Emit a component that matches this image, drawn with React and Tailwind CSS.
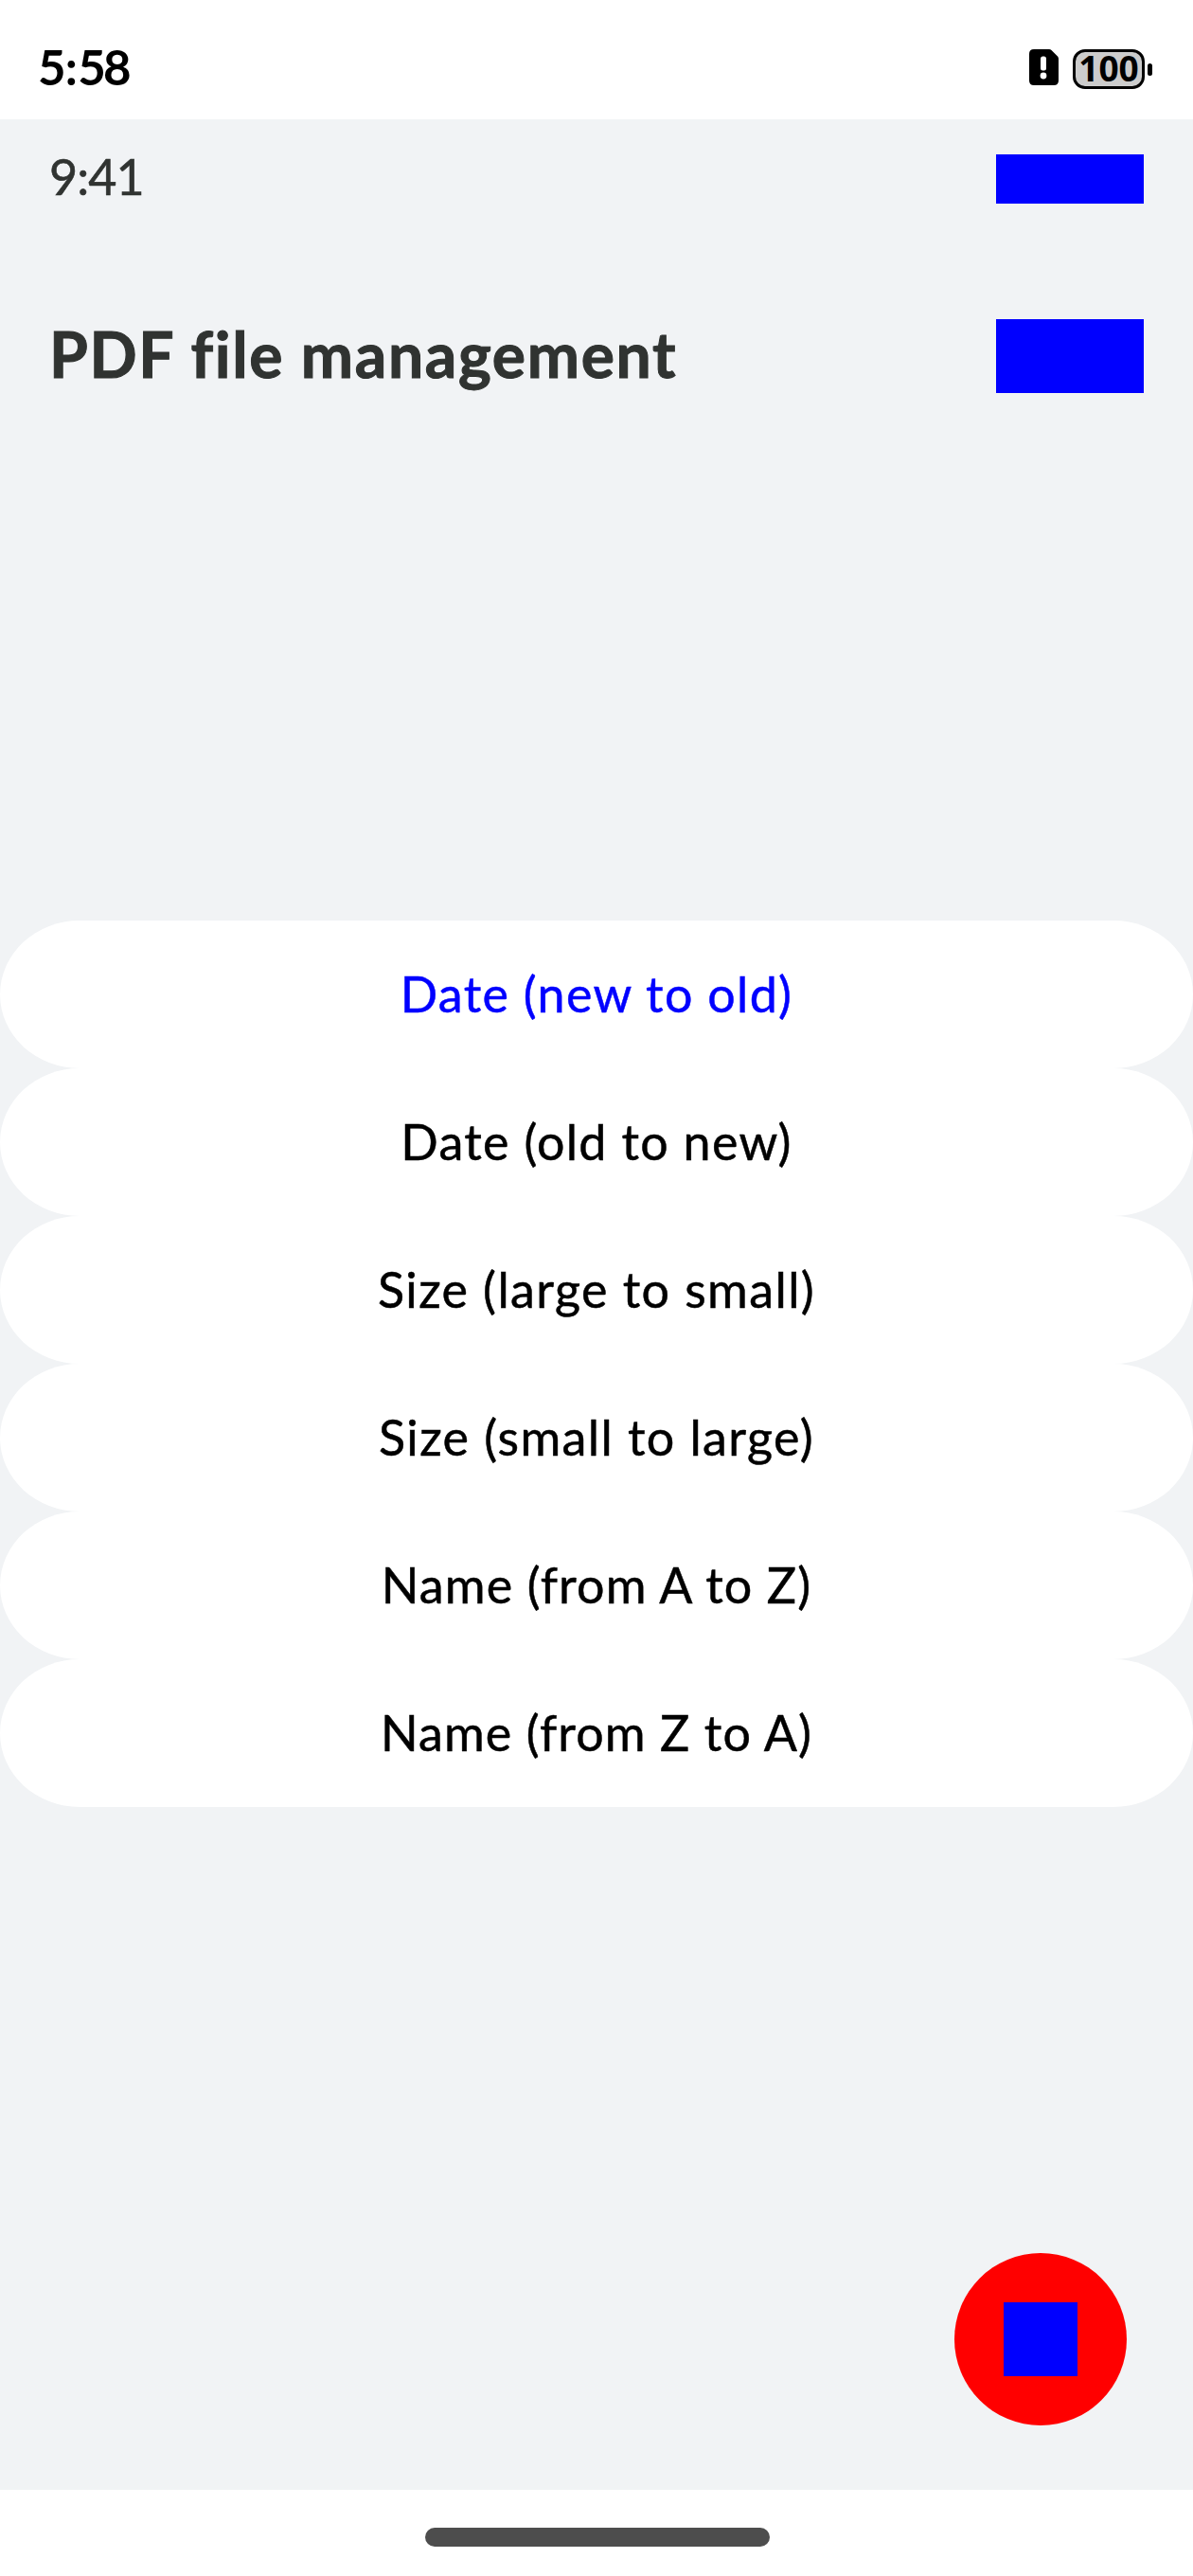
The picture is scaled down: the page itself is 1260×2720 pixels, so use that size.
import React from "react";

const options = [
  { label: "Date (new to old)", className: "text-[#0000ff] tracking-[1.3px]" },
  { label: "Date (old to new)", className: "text-black tracking-[1.3px]" },
  { label: "Size (large to small)", className: "text-black tracking-[1.4px]" },
  { label: "Size (small to large)", className: "text-black tracking-[1.4px]" },
  { label: "Name (from A to Z)", className: "text-black tracking-[1.1px]" },
  { label: "Name (from Z to A)", className: "text-black tracking-[1.1px]" },
];

function SimAlertIcon() {
  return (
    <svg width="31" height="38" viewBox="0 0 31 38" className="block">
      <path d="M5 0H21Q22.5 0 23.5 1L30 7.5Q31 8.5 31 10V33Q31 38 26 38H5Q0 38 0 33V5Q0 0 5 0Z" fill="#000" />
      <rect x="12" y="7.5" width="6" height="15" rx="2.5" fill="#fff" />
      <circle cx="15" cy="28" r="3.4" fill="#fff" />
    </svg>
  );
}

function Battery() {
  return (
    <div className="flex items-center gap-[3px]">
      <div className="flex h-[42px] w-[76px] items-center justify-center rounded-[13px] border-[3px] border-black bg-[#cccccc]">
        <span className="pb-0.5 font-['Noto_Sans',sans-serif] text-[37px] leading-[34px] font-bold text-black">100</span>
      </div>
      <div className="h-[13px] w-[5px] rounded-full bg-black" />
    </div>
  );
}

export default function App() {
  return (
    <div className="flex h-[2720px] w-[1260px] flex-col bg-white font-['Lato',sans-serif]">
      <header className="flex h-[126px] shrink-0 items-start justify-between pr-[43px] pl-[40px]">
        <span className="mt-[41px] text-[51px] leading-[60px] font-bold tracking-[-2.8px] text-black">
          5<span className="mr-[3px] ml-[2px]">:</span>58
        </span>
        <div className="mt-[52px] flex items-center gap-[15px]">
          <div className="pb-1">
            <SimAlertIcon />
          </div>
          <Battery />
        </div>
      </header>

      <main className="flex grow flex-col bg-[#f1f3f5]">
        <div className="flex h-[126px] items-center justify-between px-[52px]">
          <span className="pb-1.5 text-[52px] leading-[62px] tracking-[-0.9px] text-[#303331] [-webkit-text-stroke:0.6px]">9:41</span>
          <div className="h-[52px] w-[156px] bg-[#0000ff]" />
        </div>
        <div className="flex h-[248px] items-center justify-between px-[52px]">
          <h1 className="pb-[5px] text-[66px] leading-[78px] font-bold tracking-[1.65px] text-[#303331] [-webkit-text-stroke:1px]">PDF file management</h1>
          <div className="h-[78px] w-[156px] bg-[#0000ff]" />
        </div>

        <div className="mt-[472px] flex flex-col">
          {options.map((option) => (
            <button
              key={option.label}
              className="flex h-[156px] w-full items-center justify-center rounded-[84px/78px] bg-white pb-[3px] text-[52px] leading-[62px] [-webkit-text-stroke:0.5px]"
            >
              <span className={option.className}>{option.label}</span>
            </button>
          ))}
        </div>

        <div className="mt-auto mr-[70px] mb-[68px] flex size-[182px] items-center justify-center self-end rounded-full bg-[#ff0000]">
          <div className="size-[78px] bg-[#0000ff]" />
        </div>
      </main>

      <footer className="flex h-[91px] shrink-0 items-start justify-center pt-[40px] pl-[2px]">
        <div className="h-5 w-[364px] rounded-full bg-[#4d4d4d]" />
      </footer>
    </div>
  );
}
